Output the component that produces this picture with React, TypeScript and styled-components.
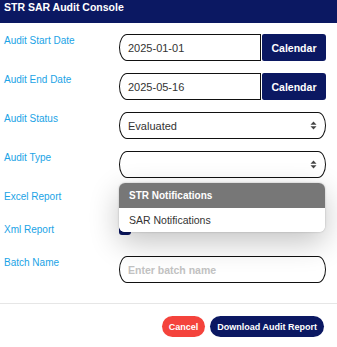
import React from "react";
import styled, { createGlobalStyle } from "styled-components";

const GlobalStyle = createGlobalStyle`
  html, body {
    margin: 0;
    padding: 0;
    background: #ffffff;
    font-family: "Liberation Sans", Arial, sans-serif;
  }
`;

const NAVY = "#0b1862";

const Console = styled.div`
  width: 337px;
  height: 347px;
  background: #fff;
  overflow: hidden;
`;

const Header = styled.div`
  height: 23px;
  background: ${NAVY};
  color: #fff;
  font-size: 10.5px;
  font-weight: bold;
  line-height: 14px;
  padding: 0 4px;
`;

const Form = styled.div`
  display: grid;
  grid-template-columns: 115px 207px;
  row-gap: 12px;
  padding: 11px 0 20px 4px;
`;

const Label = styled.div`
  color: #1aa3e6;
  font-size: 10px;
  line-height: 12px;
  padding-top: 1px;
`;

const Field = styled.div<{ $short?: boolean }>`
  position: relative;
  display: flex;
  height: ${(p) => (p.$short ? "21px" : "27px")};
`;

const DateInput = styled.div`
  flex: 0 0 142px;
  box-sizing: border-box;
  height: 27px;
  border: 1px solid #111;
  border-radius: 8px 0 0 8px / 13.5px 0 0 13.5px;
  padding-left: 8px;
  display: flex;
  align-items: center;
  font-size: 11px;
  color: #333;
`;

const CalendarButton = styled.button`
  margin-left: 1px;
  width: 64px;
  height: 27px;
  border: none;
  border-radius: 2px 3px 3px 2px;
  background: ${NAVY};
  color: #fff;
  font-family: inherit;
  font-size: 10.5px;
  font-weight: bold;
  padding: 0;
`;

const Select = styled.div`
  box-sizing: border-box;
  width: 207px;
  height: 27px;
  border: 1px solid #111;
  border-radius: 8px / 13.5px;
  padding: 0 8px 0 8px;
  display: flex;
  align-items: center;
  justify-content: space-between;
  font-size: 11px;
  color: #333;
`;

const Placeholder = styled.span`
  color: #c2c2c2;
  font-size: 10.5px;
  font-weight: bold;
`;

const Arrows = () => (
  <svg width="7" height="9" viewBox="0 0 7 9">
    <path d="M3.5 0.5 L6.5 3.8 H0.5 Z" fill="#444" />
    <path d="M3.5 8.5 L6.5 5.2 H0.5 Z" fill="#444" />
  </svg>
);

const Menu = styled.div`
  position: absolute;
  top: 32px;
  left: 0;
  width: 206px;
  background: #fff;
  border-radius: 6px;
  overflow: hidden;
  box-shadow: 0 10px 30px rgba(0, 0, 0, 0.24), 0 0 2px rgba(0, 0, 0, 0.25);
  z-index: 2;
`;

const Option = styled.div<{ $active?: boolean }>`
  height: ${(p) => (p.$active ? "25px" : "24px")};
  display: flex;
  align-items: center;
  padding-left: 10px;
  background: ${(p) => (p.$active ? "#777777" : "#fff")};
  color: ${(p) => (p.$active ? "#fff" : "#333")};
  font-size: ${(p) => (p.$active ? "10px" : "10.5px")};
  font-weight: ${(p) => (p.$active ? "bold" : "normal")};
`;

const Check = styled.span`
  display: block;
  width: 12px;
  height: 12px;
  border-radius: 3px;
  background: ${NAVY};
`;

const Divider = styled.div`
  height: 1px;
  background: #e6e6e6;
`;

const Footer = styled.div`
  display: flex;
  justify-content: flex-end;
  gap: 5px;
  padding: 12px 13px 0 0;
`;

const Button = styled.button<{ $danger?: boolean }>`
  height: 21px;
  border: none;
  border-radius: 11px;
  padding: 0 7px;
  background: ${(p) => (p.$danger ? "#f4433c" : NAVY)};
  color: #fff;
  font-family: inherit;
  font-size: 9px;
  font-weight: bold;
`;

export default function App() {
  return (
    <>
      <GlobalStyle />
      <Console>
        <Header>STR SAR Audit Console</Header>
        <Form>
          <Label>Audit Start Date</Label>
          <Field>
            <DateInput>2025-01-01</DateInput>
            <CalendarButton>Calendar</CalendarButton>
          </Field>

          <Label>Audit End Date</Label>
          <Field>
            <DateInput>2025-05-16</DateInput>
            <CalendarButton>Calendar</CalendarButton>
          </Field>

          <Label>Audit Status</Label>
          <Field>
            <Select>
              <span>Evaluated</span>
              <Arrows />
            </Select>
          </Field>

          <Label>Audit Type</Label>
          <Field>
            <Select>
              <span />
              <Arrows />
            </Select>
            <Menu>
              <Option $active>STR Notifications</Option>
              <Option>SAR Notifications</Option>
            </Menu>
          </Field>

          <Label>Excel Report</Label>
          <Field $short>
            <Check />
          </Field>

          <Label>Xml Report</Label>
          <Field $short>
            <Check />
          </Field>

          <Label>Batch Name</Label>
          <Field>
            <Select>
              <Placeholder>Enter batch name</Placeholder>
            </Select>
          </Field>
        </Form>
        <Divider />
        <Footer>
          <Button $danger>Cancel</Button>
          <Button>Download Audit Report</Button>
        </Footer>
      </Console>
    </>
  );
}
